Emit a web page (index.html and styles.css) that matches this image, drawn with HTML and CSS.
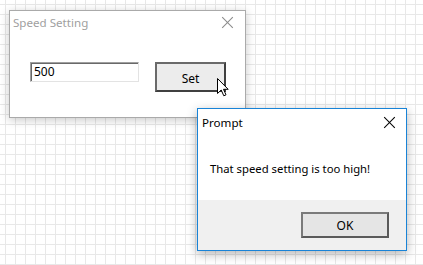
FILE: index.html
```html
<!DOCTYPE html>
<html lang="en">
<head>
    <meta charset="UTF-8">
    <title>Speed Setting</title>
    <link rel="stylesheet" href="styles.css">
</head>
<body>
    <div class="desktop">
        <!-- Окно настройки скорости (неактивное) -->
        <div class="window inactive speed-window">
            <div class="titlebar">
                <span class="title">Speed Setting</span>
                <span class="close"></span>
            </div>
            <div class="speed-body">
                <div class="textbox">500</div>
                <button class="btn set-btn">Set</button>
            </div>
        </div>

        <!-- Курсор мыши -->
        <svg class="cursor" width="14" height="20" viewBox="0 0 14 20">
            <path d="M0.5 0.5 L0.5 15.5 L4.2 12 L6.8 17.8 L9 16.8 L6.5 11.3 L11.2 11.3 Z" fill="#fff" stroke="#000" stroke-width="1" stroke-linejoin="miter"/>
        </svg>

        <!-- Сообщение -->
        <div class="window active prompt-window">
            <div class="titlebar">
                <span class="title">Prompt</span>
                <span class="close"></span>
            </div>
            <div class="prompt-body">That speed setting is too high!</div>
            <div class="prompt-footer">
                <button class="btn ok-btn">OK</button>
            </div>
        </div>
    </div>
</body>
</html>
```

FILE: styles.css
```css
/* Общие стили */
body {
    margin: 0;
    width: 423px;
    height: 265px;
    overflow: hidden;
    font-family: 'Noto Sans', sans-serif;
    font-size: 11.3px;
}

/* Фон в клетку */
.desktop {
    position: relative;
    width: 423px;
    height: 265px;
    background-color: #ffffff;
    background-image:
        linear-gradient(to right, #e8e8e8 1px, transparent 1px),
        linear-gradient(to bottom, #e8e8e8 1px, transparent 1px);
    background-size: 10px 10px;
    background-position: 5px 4px;
}

.window {
    position: absolute;
    box-sizing: border-box;
    background-color: #ffffff;
    display: flex;
    flex-direction: column;
}

.window.inactive {
    border: 1px solid #aaaaaa;
    box-shadow: 0 2px 9px rgba(0, 0, 0, 0.22);
}

.window.active {
    border: 1px solid #1883d7;
    box-shadow: 0 3px 10px rgba(0, 0, 0, 0.3);
}

.titlebar {
    display: flex;
    align-items: center;
    justify-content: space-between;
}

.title {
    font-size: 11.6px;
}

.inactive .title {
    color: #a0a0a0;
}

.active .title {
    color: #000000;
}

/* Крестик закрытия */
.close {
    position: relative;
    width: 11px;
    height: 11px;
}

.close::before,
.close::after {
    content: '';
    position: absolute;
    left: -2px;
    top: 5px;
    width: 15px;
    height: 1px;
    background-color: #000;
    transform: rotate(45deg);
}

.close::after {
    transform: rotate(-45deg);
}

.inactive .close::before,
.inactive .close::after {
    background-color: #8a8a8a;
}

/* Окно Speed Setting */
.speed-window {
    left: 9px;
    top: 10px;
    width: 237px;
    height: 108px;
}

.speed-window .titlebar {
    height: 23px;
    padding: 0 12px 0 3px;
}

.speed-body {
    display: flex;
    align-items: flex-start;
    gap: 16px;
    padding: 28px 0 0 20px;
}

.textbox {
    box-sizing: border-box;
    width: 109px;
    height: 20px;
    padding: 1px 0 0 3px;
    border: 1px solid;
    border-color: #a0a0a0 #e3e3e3 #e3e3e3 #a0a0a0;
    box-shadow: inset 1px 1px 0 #696969;
    line-height: 16px;
    font-size: 12px;
    color: #000;
}

.btn {
    box-sizing: border-box;
    font-family: 'Noto Sans', sans-serif;
    font-size: 12px;
    color: #000;
    background-color: #e5e5e5;
    padding: 0;
}

.set-btn {
    width: 71px;
    height: 30px;
    border: 2px solid #6a6a6a;
    border-right-color: #404040;
    border-bottom-color: #404040;
    background-color: #ececec;
    padding-top: 3px;
}

/* Окно Prompt */
.prompt-window {
    left: 197px;
    top: 108px;
    width: 210px;
    height: 143px;
}

.prompt-window .titlebar {
    height: 26px;
    padding: 0 11px 0 4px;
}

.prompt-body {
    height: 65px;
    padding-left: 12px;
    line-height: 67px;
    color: #000;
}

.prompt-footer {
    flex: 1;
    display: flex;
    justify-content: flex-end;
    align-items: flex-start;
    padding: 12px 17px 0 0;
    background-color: #f0f0f0;
}

.ok-btn {
    width: 88px;
    height: 26px;
    border: 2px solid #7a7a7a;
    border-right-color: #5a5a5a;
    border-bottom-color: #5a5a5a;
}

/* Курсор лежит поверх остального */
.cursor {
    position: absolute;
    left: 217px;
    top: 78px;
    z-index: 2;
}
```
